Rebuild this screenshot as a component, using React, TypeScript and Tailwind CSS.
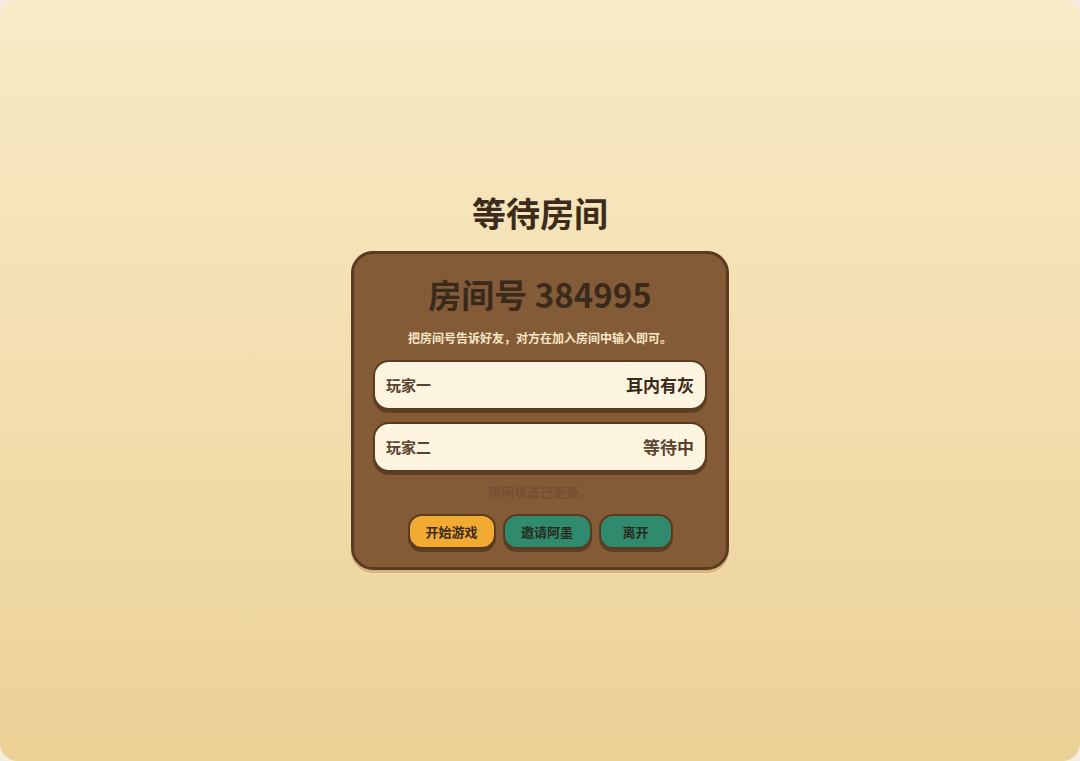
import React from "react";

const font = { fontFamily: '"Noto Sans CJK SC", "Noto Sans", sans-serif' };

export default function App() {
  return (
    <div className="w-[1080px] h-[761px] bg-[#f4ede0]" style={font}>
      <div className="w-full h-full rounded-[18px] bg-gradient-to-b from-[#f9ebc7] to-[#ecd196] flex flex-col items-center justify-center">
        <h1 className="text-[34px] leading-[44px] font-bold text-[#3d2c1b]">等待房间</h1>
        <div className="mt-[16px] w-[378px] rounded-[22px] border-[3px] border-[#5b3b1f] bg-[#845b37] shadow-[0_3px_0_rgba(150,100,50,0.3)] px-[19px] pt-[20px] pb-[18px] flex flex-col items-center">
          <div className="text-[33px] leading-[40px] font-bold text-[#3a2a1c]">房间号 384995</div>
          <div className="mt-[15px] text-[12px] leading-[18px] font-bold text-[#f7e8c8]">把房间号告诉好友，对方在加入房间中输入即可。</div>
          <div className="mt-[13px] w-full flex flex-col gap-[12px]">
            <div className="h-[50px] w-full rounded-[16px] border-2 border-[#5b3b1f] bg-[#fdf5e0] shadow-[0_3px_0_#5e3f23] px-[11px] flex items-center justify-between">
              <span className="text-[15px] font-bold text-[#5a4330]">玩家一</span>
              <span className="text-[17px] font-bold text-[#3a2a1c]">耳内有灰</span>
            </div>
            <div className="h-[50px] w-full rounded-[16px] border-2 border-[#5b3b1f] bg-[#fdf5e0] shadow-[0_3px_0_#5e3f23] px-[11px] flex items-center justify-between">
              <span className="text-[15px] font-bold text-[#5a4330]">玩家二</span>
              <span className="text-[17px] font-bold text-[#5a4330]">等待中</span>
            </div>
          </div>
          <div className="mt-[10px] text-[13px] leading-[20px] font-bold text-[#735032]">房间状态已更新。</div>
          <div className="mt-[12px] flex gap-[7px]">
            <button className="h-[35px] w-[88px] rounded-[14px] border-2 border-[#5b3b1f] bg-[#f2aa33] shadow-[0_3px_0_#5e3f23] text-[13px] font-bold text-[#3a2a1c]">开始游戏</button>
            <button className="h-[35px] w-[89px] rounded-[14px] border-2 border-[#5b3b1f] bg-[#2f8a6e] shadow-[0_3px_0_#5e3f23] text-[13px] font-bold text-[#2a2a1c]">邀请阿墨</button>
            <button className="h-[35px] w-[74px] rounded-[14px] border-2 border-[#5b3b1f] bg-[#2f8a6e] shadow-[0_3px_0_#5e3f23] text-[13px] font-bold text-[#2a2a1c]">离开</button>
          </div>
        </div>
      </div>
    </div>
  );
}
